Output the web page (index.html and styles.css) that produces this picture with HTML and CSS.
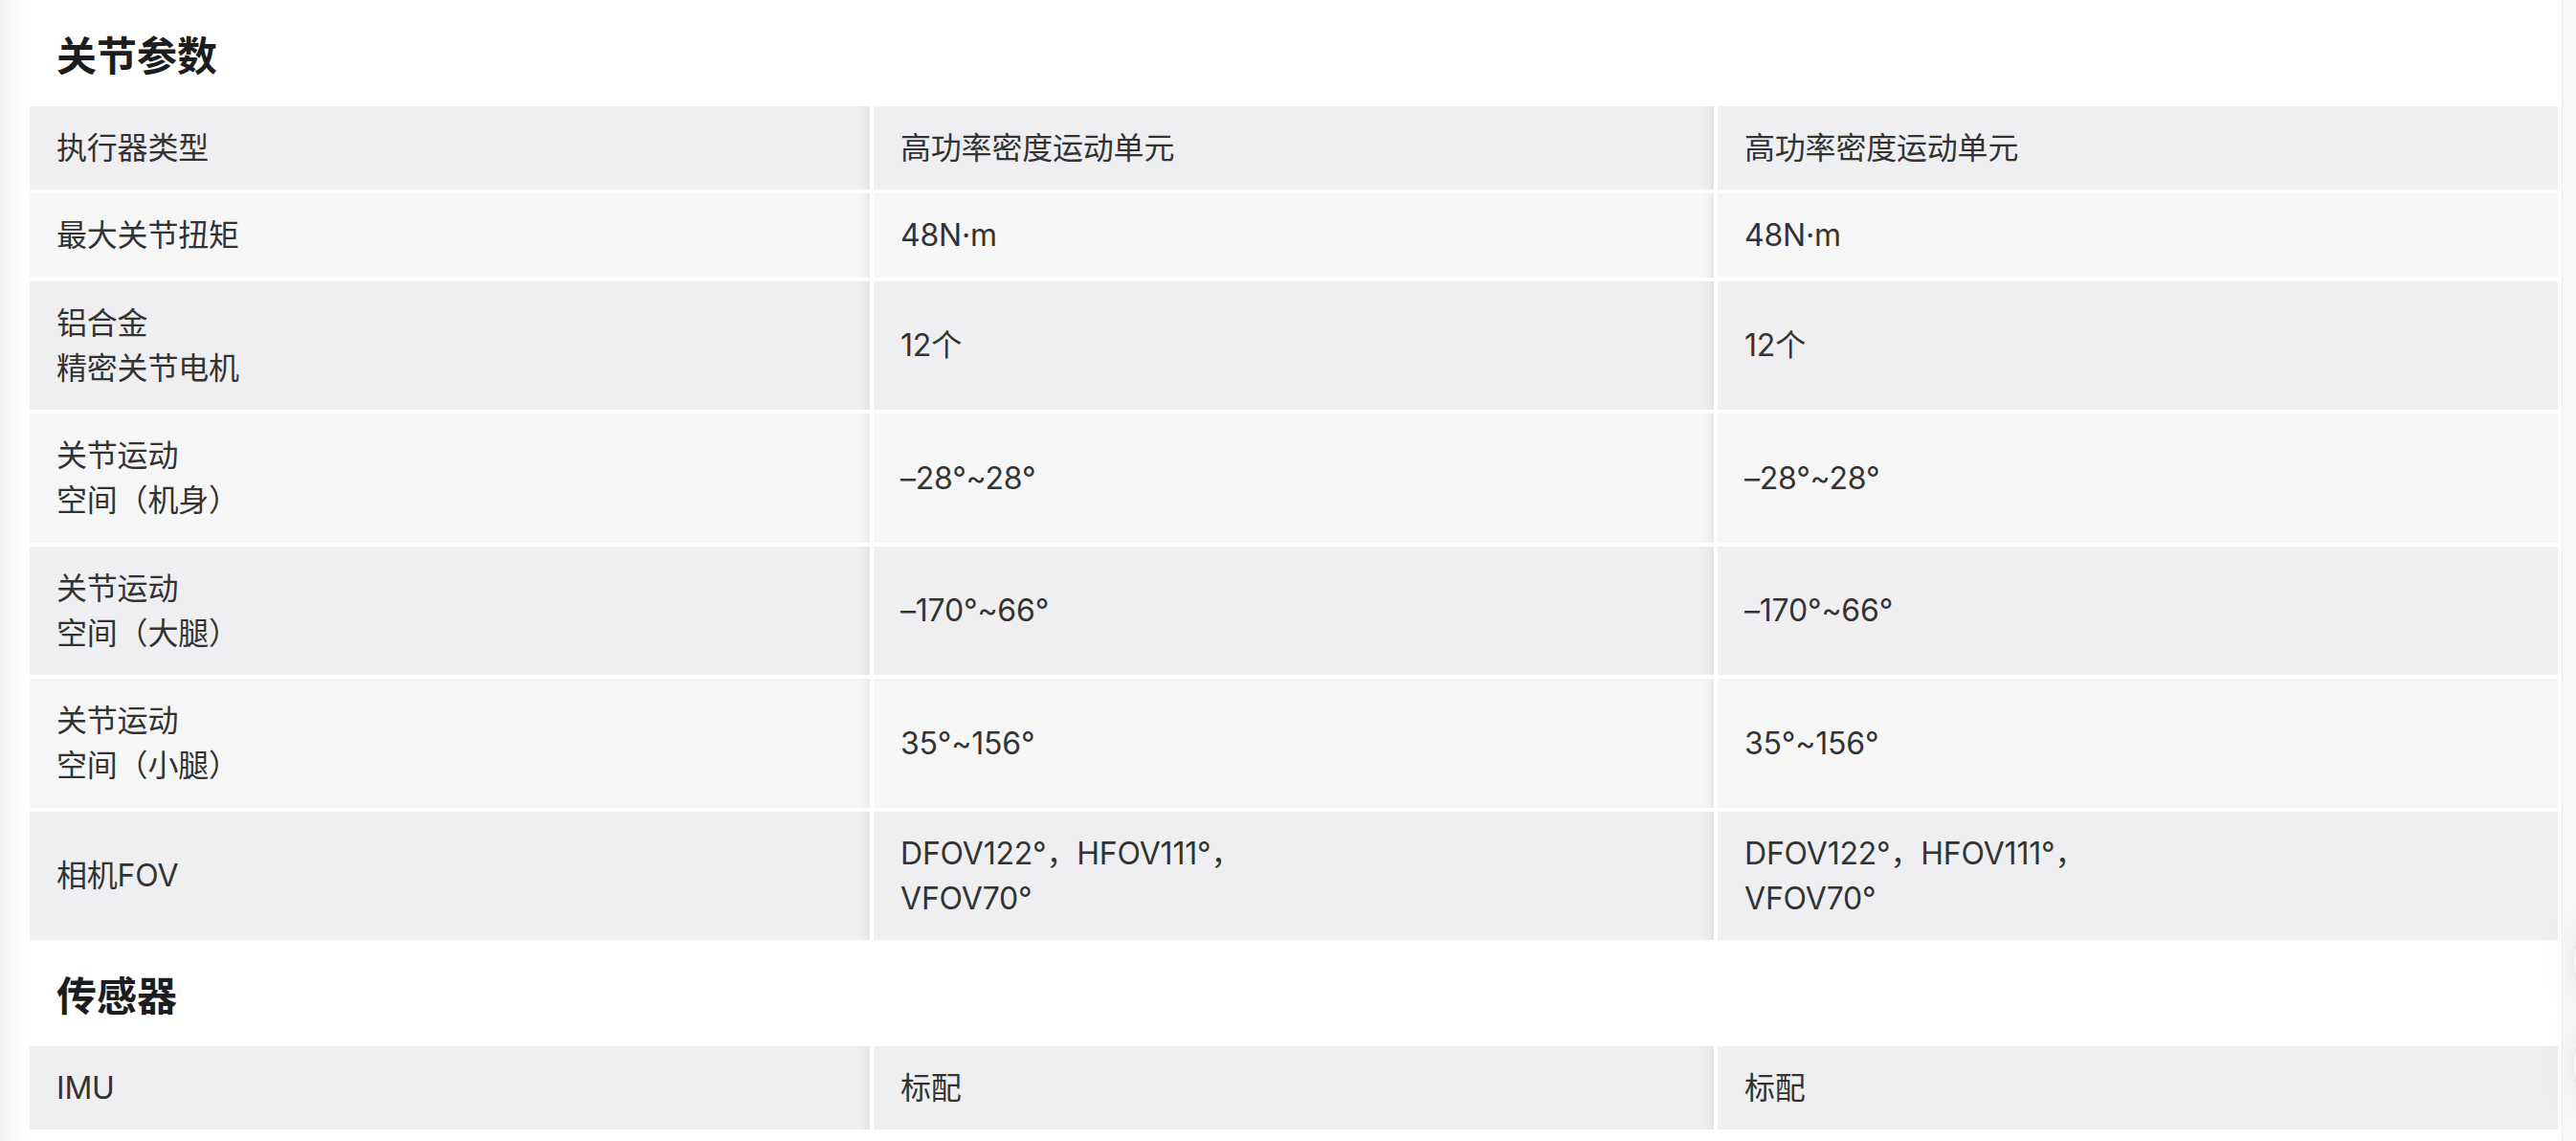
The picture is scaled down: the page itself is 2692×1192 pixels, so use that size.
FILE: index.html
```html
<!DOCTYPE html>
<html lang="zh-CN">
<head>
<meta charset="utf-8">
<title>参数</title>
<link rel="stylesheet" href="styles.css">
</head>
<body>
<div class="page">
  <main class="main">
    <section class="spec">
      <h2 class="spec-title">关节参数</h2>
      <div class="rows">
        <div class="row odd"><div class="cell">执行器类型</div><div class="cell">高功率密度运动单元</div><div class="cell last">高功率密度运动单元</div></div>
        <div class="row even"><div class="cell">最大关节扭矩</div><div class="cell">48N·m</div><div class="cell last">48N·m</div></div>
        <div class="row odd"><div class="cell">铝合金<br>精密关节电机</div><div class="cell">12个</div><div class="cell last">12个</div></div>
        <div class="row even"><div class="cell">关节运动<br>空间（机身）</div><div class="cell">–28°~28°</div><div class="cell last">–28°~28°</div></div>
        <div class="row odd"><div class="cell">关节运动<br>空间（大腿）</div><div class="cell">–170°~66°</div><div class="cell last">–170°~66°</div></div>
        <div class="row even"><div class="cell">关节运动<br>空间（小腿）</div><div class="cell">35°~156°</div><div class="cell last">35°~156°</div></div>
        <div class="row odd"><div class="cell">相机FOV</div><div class="cell">DFOV122°，HFOV111°，<br>VFOV70°</div><div class="cell last">DFOV122°，HFOV111°，<br>VFOV70°</div></div>
      </div>
    </section>
    <section class="spec">
      <h2 class="spec-title">传感器</h2>
      <div class="rows">
        <div class="row odd"><div class="cell">IMU</div><div class="cell">标配</div><div class="cell last">标配</div></div>
      </div>
    </section>
  </main>
  <div class="scrollbar"></div>
</div>
<div class="fab fab-one"></div>
<div class="fab fab-two"></div>
</body>
</html>
```

FILE: styles.css
```css
* { box-sizing: border-box; }
html, body { margin: 0; padding: 0; }
body {
  background: #ffffff;
  font-family: "Inter", "Noto Sans CJK SC", sans-serif;
  color: #333333;
  overflow: hidden;
}
.page {
  display: flex;
  min-height: 100vh;
}
.main {
  flex: 1;
  padding: 0 4px 0 31px;
  background: linear-gradient(to right, #f2f2f3 0, #fbfbfb 18px, #ffffff 27px);
}
.scrollbar {
  width: 15px;
  flex: none;
  background: #f8f8f8;
  border-left: 1px solid #ececec;
}
.spec-title {
  margin: 0;
  height: 111px;
  display: flex;
  align-items: center;
  padding-left: 28px;
  font-family: "Noto Sans CJK SC", sans-serif;
  font-size: 42px;
  font-weight: 700;
  color: #1d1d1f;
  background: #ffffff;
}
.rows {
  display: flex;
  flex-direction: column;
  gap: 4px;
}
.row {
  display: grid;
  grid-template-columns: repeat(3, 1fr);
  gap: 4px;
}
.cell {
  padding: 20px 28px;
  font-size: 32px;
  line-height: 47.25px;
  letter-spacing: -0.2px;
  display: flex;
  flex-direction: column;
  justify-content: center;
  color: #333333;
}
.odd .cell { background-color: #efeff1; }
.even .cell { background-color: #f6f6f6; }
.cell:not(.last) {
  background-image: linear-gradient(to left, rgba(0,0,0,0.05) 0, rgba(0,0,0,0.02) 5px, rgba(0,0,0,0) 12px);
}
.fab {
  position: fixed;
  right: -96px;
  width: 100px;
  height: 100px;
  border-radius: 50%;
  background: #f4f4f5;
  border: 1px solid #e4e4e6;
  box-shadow: 0 0 40px rgba(0,0,0,0.07);
}
.fab-one { top: 955px; }
.fab-two { top: 1063px; }
```
